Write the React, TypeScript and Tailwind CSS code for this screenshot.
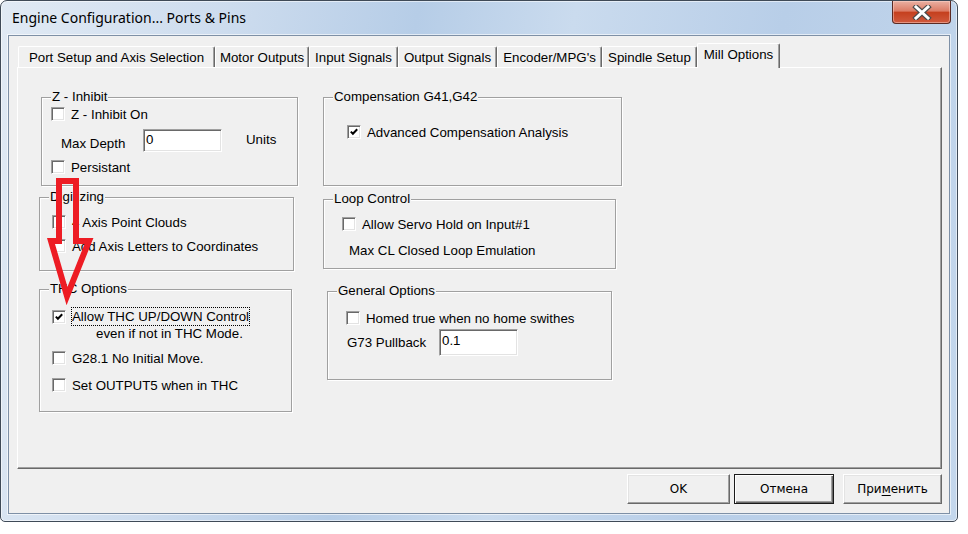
import type { ReactNode } from "react";

const SUNKEN =
  "border border-t-[#a0a0a0] border-l-[#a0a0a0] border-b-white border-r-white shadow-[inset_1px_1px_0_#696969,inset_-1px_-1px_0_#e3e3e3]";

function Check({ checked = false }: { checked?: boolean }) {
  return (
    <span className={`w-[14px] h-[14px] shrink-0 bg-white flex items-center justify-center ${SUNKEN}`}>
      {checked && (
        <svg width="8" height="8" viewBox="0 0 8 8">
          <path d="M0.8 3.6 L2.9 5.7 L7.2 1.2" fill="none" stroke="#000" strokeWidth="2" />
        </svg>
      )}
    </span>
  );
}

function CheckRow({ label, checked, className = "" }: { label: string; checked?: boolean; className?: string }) {
  return (
    <div className={`flex items-center gap-[6px] h-[14px] ${className}`}>
      <Check checked={checked} />
      <span className="leading-[15px] whitespace-nowrap">{label}</span>
    </div>
  );
}

function Group({ title, className, children }: { title: string; className: string; children: ReactNode }) {
  return (
    <div className={`relative shrink-0 border border-[#a0a0a0] shadow-[inset_1px_1px_0_#fff,1px_1px_0_#fff] ${className}`}>
      <span className="absolute left-[9px] -top-[9px] px-[1px] bg-[#f0f0f0] leading-[16px] whitespace-nowrap">{title}</span>
      {children}
    </div>
  );
}

function Input({ value, className }: { value: string; className: string }) {
  return <div className={`bg-white pl-[2px] leading-[15px] shrink-0 ${SUNKEN} ${className}`}>{value}</div>;
}

const tabs = [
  { label: "Port Setup and Axis Selection", w: "w-[197px]" },
  { label: "Motor Outputs", w: "w-[94px]" },
  { label: "Input Signals", w: "w-[89px]" },
  { label: "Output Signals", w: "w-[99px]" },
  { label: "Encoder/MPG's", w: "w-[105px]" },
  { label: "Spindle Setup", w: "w-[95px]" },
];

export default function App() {
  return (
    <div className="relative w-[968px] h-[534px] bg-white overflow-hidden font-['Liberation_Sans',Arial,sans-serif] text-[13.3px] text-black">
      {/* window frame */}
      <div className="w-[958px] h-[522px] flex flex-col rounded-t-[7px] rounded-b-[5px] border border-[#3f4a57] bg-[linear-gradient(100deg,#e1eaf4_0%,#cddcee_22%,#b6cde7_40%,#cadbee_55%,#b8cee8_75%,#c4d7ec_100%)] shadow-[inset_0_0_0_1px_rgba(255,255,255,0.55)]">
        {/* title bar */}
        <div className="h-[34px] shrink-0 flex justify-between items-start">
          <div className="pl-[11px] pt-[8px] text-[14px] leading-[18px] font-['Noto_Sans',sans-serif] text-black">
            Engine Configuration... Ports &amp; Pins
          </div>
          <div className="mr-[6px] w-[59px] h-[23px] rounded-b-[4px] border border-t-0 border-[#5b2a23] bg-[linear-gradient(180deg,#eab0a2_0%,#dc7c66_45%,#c5401f_52%,#d05a3e_100%)] shadow-[inset_0_0_0_1px_rgba(255,220,210,0.45)] flex items-center justify-center">
            <svg width="22" height="15" viewBox="0 0 22 15">
              <path d="M5 2 L17 13 M17 2 L5 13" stroke="#4a4a4a" strokeWidth="5.2" strokeLinecap="square" />
              <path d="M5 2 L17 13 M17 2 L5 13" stroke="#ffffff" strokeWidth="3" strokeLinecap="square" />
            </svg>
          </div>
        </div>

        {/* client area */}
        <div className="mx-[7px] h-[479px] shrink-0 border border-[#7e90a6] bg-[#f0f0f0] flex flex-col shadow-[0_0_0_1px_rgba(255,255,255,0.6)]">
          {/* tabs */}
          <div className="mt-[7px] ml-[9px] h-[24px] flex items-end">
            {tabs.map((t) => (
              <div
                key={t.label}
                className={`${t.w} h-[21px] shrink-0 flex items-center justify-center whitespace-nowrap leading-[15px] rounded-t-[2px] border-t border-l border-t-white border-l-white border-r border-r-[#696969] shadow-[inset_-1px_0_0_#a0a0a0]`}
              >
                {t.label}
              </div>
            ))}
            <div className="w-[83px] h-[25px] -mb-[1px] relative z-10 shrink-0 flex items-center justify-center pb-[3px] whitespace-nowrap leading-[15px] bg-[#f0f0f0] rounded-t-[2px] border-t border-l border-t-white border-l-white border-r border-r-[#696969] shadow-[inset_-1px_0_0_#a0a0a0]">
              Mill Options
            </div>
          </div>

          {/* tab panel */}
          <div className="ml-[8px] w-[925px] h-[402px] shrink-0 flex border border-t-white border-l-white border-b-[#696969] border-r-[#696969] shadow-[inset_-1px_-1px_0_#a0a0a0]">
            {/* left column */}
            <div className="w-[300px] shrink-0 flex flex-col">
              <Group title="Z - Inhibit" className="ml-[23px] mt-[29px] w-[257px] h-[89px]">
                <div className="flex flex-col pl-[9px]">
                  <CheckRow label="Z - Inhibit On" className="mt-[9px]" />
                  <div className="mt-[8px] h-[23px] flex items-start">
                    <span className="ml-[10px] w-[82px] mt-[7px] leading-[15px] whitespace-nowrap">Max Depth</span>
                    <Input value="0" className="w-[79px] h-[23px] pt-[2px]" />
                    <span className="ml-[24px] mt-[3px] leading-[15px]">Units</span>
                  </div>
                  <CheckRow label="Persistant" className="mt-[8px]" />
                </div>
              </Group>

              <Group title="Digitizing" className="ml-[21px] mt-[11px] w-[255px] h-[74px]">
                <div className="flex flex-col pl-[12px]">
                  <CheckRow label="4 Axis Point Clouds" className="mt-[17px]" />
                  <CheckRow label="Add Axis Letters to Coordinates" className="mt-[10px]" />
                </div>
              </Group>

              <Group title="THC Options" className="ml-[21px] mt-[18px] w-[253px] h-[123px]">
                <div className="flex flex-col pl-[12px]">
                  <div className="mt-[17px] h-[19px] flex items-center">
                    <Check checked />
                    <span className="ml-[5px] border border-dotted border-black leading-[17px] whitespace-nowrap">
                      Allow THC UP/DOWN Control
                    </span>
                  </div>
                  <div className="ml-[44px] leading-[15px] whitespace-nowrap">even if not in THC Mode.</div>
                  <CheckRow label="G28.1 No Initial Move." className="mt-[10px]" />
                  <CheckRow label="Set OUTPUT5 when in THC" className="mt-[13px]" />
                </div>
              </Group>
            </div>

            {/* right column */}
            <div className="flex flex-col">
              <Group title="Compensation G41,G42" className="ml-[5px] mt-[29px] w-[299px] h-[89px]">
                <div className="flex flex-col pl-[23px]">
                  <CheckRow label="Advanced Compensation Analysis" checked className="mt-[27px]" />
                </div>
              </Group>

              <Group title="Loop Control" className="ml-[5px] mt-[13px] w-[293px] h-[70px]">
                <div className="flex flex-col pl-[18px]">
                  <CheckRow label="Allow Servo Hold on Input#1" className="mt-[17px]" />
                  <div className="ml-[7px] mt-[12px] leading-[15px] whitespace-nowrap">Max CL Closed Loop Emulation</div>
                </div>
              </Group>

              <Group title="General Options" className="ml-[9px] mt-[22px] w-[285px] h-[89px]">
                <div className="flex flex-col pl-[18px]">
                  <CheckRow label="Homed true when no home swithes" className="mt-[19px]" />
                  <div className="mt-[4px] h-[27px] flex items-start">
                    <span className="ml-[1px] w-[92px] mt-[6px] leading-[15px] whitespace-nowrap">G73 Pullback</span>
                    <Input value="0.1" className="w-[79px] h-[27px] pt-[3px]" />
                  </div>
                </div>
              </Group>
            </div>
          </div>

          {/* dialog buttons */}
          <div className="mt-[5px] h-[30px] flex justify-end pr-[7px] font-['DejaVu_Sans',sans-serif] text-[12px]">
            <div className="w-[103px] h-[30px] flex items-center justify-center bg-[#f0f0f0] border border-t-white border-l-white border-b-[#696969] border-r-[#696969] shadow-[inset_-1px_-1px_0_#a0a0a0,inset_1px_1px_0_#e3e3e3]">
              OK
            </div>
            <div className="ml-[4px] w-[100px] h-[30px] flex items-center justify-center bg-[#f0f0f0] border border-[#1a1a1a] shadow-[inset_1px_1px_0_#fff,inset_-1px_-1px_0_#696969,inset_-2px_-2px_0_#a0a0a0]">
              Отмена
            </div>
            <div className="ml-[9px] w-[99px] h-[30px] flex items-center justify-center bg-[#f0f0f0] border border-t-white border-l-white border-b-[#696969] border-r-[#696969] shadow-[inset_-1px_-1px_0_#a0a0a0,inset_1px_1px_0_#e3e3e3]">
              <span>
                При<span className="underline underline-offset-[2px]">м</span>енить
              </span>
            </div>
          </div>
        </div>
      </div>

      {/* red annotation arrow drawn over the dialog */}
      <svg className="absolute left-0 top-0 pointer-events-none" width="968" height="534" viewBox="0 0 968 534">
        <path
          d="M59 181 L76 181 L76 241 L89 241 L67 296 L51 241 L59 241 Z"
          fill="none"
          stroke="#ed1c24"
          strokeWidth="6"
          strokeLinejoin="miter"
        />
      </svg>
    </div>
  );
}
